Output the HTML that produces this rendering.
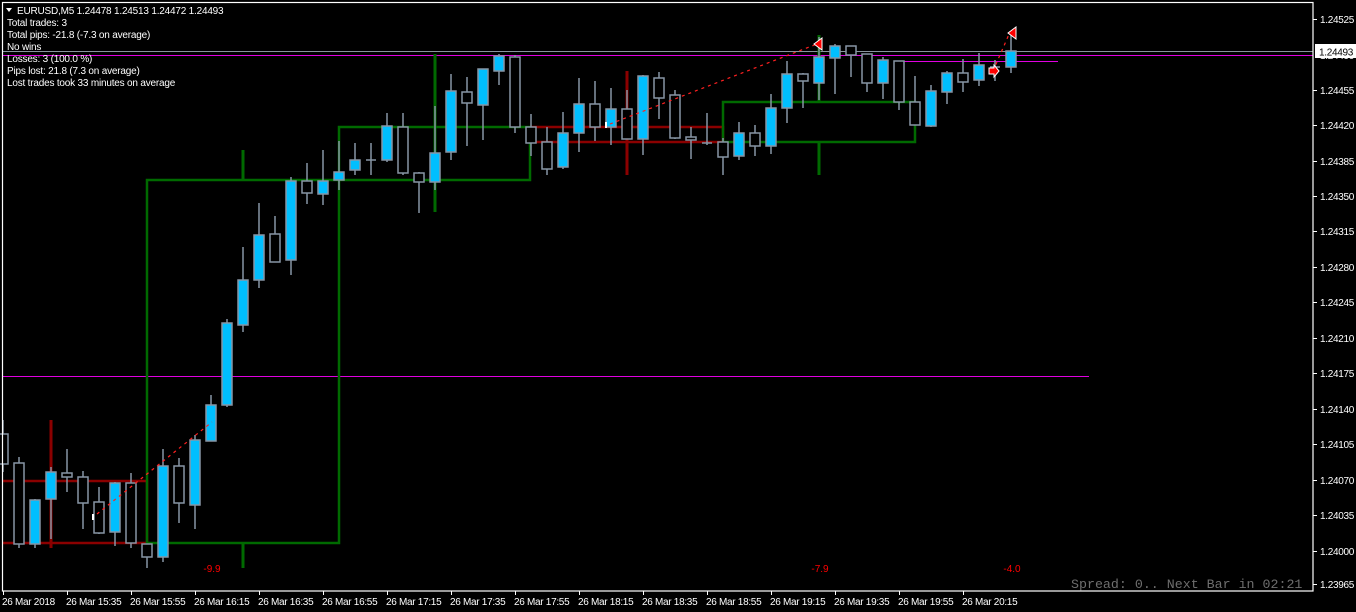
<!DOCTYPE html>
<html><head><meta charset="utf-8"><style>
html,body{margin:0;padding:0;background:#000;width:1356px;height:612px;overflow:hidden}
svg{display:block}
.b{fill:#00bfff;stroke:#8795a5;stroke-width:1.5}
.r{fill:#000;stroke:#8795a5;stroke-width:1.5}
.w{stroke:#8795a5;stroke-width:1.5}
text{font-family:"Liberation Sans",Tahoma,sans-serif}
</style></head><body>
<svg width="1356" height="612" viewBox="0 0 1356 612" xmlns="http://www.w3.org/2000/svg">
<rect width="1356" height="612" fill="#000"/>
<line x1="2" y1="51.5" x2="1313" y2="51.5" stroke="#8a94a0" stroke-width="1"/>
<line x1="2" y1="55.5" x2="1313" y2="55.5" stroke="#e000e0" stroke-width="1"/>
<line x1="900" y1="61.5" x2="1058" y2="61.5" stroke="#e000e0" stroke-width="1"/>
<line x1="2" y1="376.5" x2="1089" y2="376.5" stroke="#e000e0" stroke-width="1"/>
<g stroke="#8b0000" stroke-width="2.5" fill="none">
<polyline points="3,481 147,481 147,543 3,543"/>
<polyline points="530,127 723,127 723,142 530,142"/>
</g>
<line x1="51" y1="420" x2="51" y2="548" stroke="#8b0000" stroke-width="3"/>
<line x1="627" y1="71" x2="627" y2="175" stroke="#8b0000" stroke-width="3"/>
<g stroke="#006a00" stroke-width="2.5" fill="none">
<rect x="147" y="180" width="192" height="363"/>
<rect x="339" y="127" width="191" height="53"/>
<rect x="723" y="102" width="192" height="40"/>
</g>
<g stroke="#006a00" stroke-width="3">
<line x1="243" y1="150" x2="243" y2="181"/><line x1="243" y1="543" x2="243" y2="568"/>
<line x1="435" y1="54" x2="435" y2="212"/>
<line x1="819" y1="35" x2="819" y2="102"/><line x1="819" y1="142" x2="819" y2="175"/>
</g>
<g>
<line class="w" x1="3" y1="420" x2="3" y2="472"/><rect class="r" x="-2" y="434" width="10" height="30"/>
<line class="w" x1="19" y1="457" x2="19" y2="548"/><rect class="r" x="14" y="463" width="10" height="81"/>
<line class="w" x1="35" y1="499" x2="35" y2="548"/><rect class="b" x="30" y="500" width="10" height="44"/>
<line class="w" x1="51" y1="467" x2="51" y2="539"/><rect class="b" x="46" y="472" width="10" height="27"/>
<line class="w" x1="67" y1="449" x2="67" y2="492"/><rect class="r" x="62" y="473" width="10" height="4"/>
<line class="w" x1="83" y1="471" x2="83" y2="529"/><rect class="r" x="78" y="477" width="10" height="26"/>
<line class="w" x1="99" y1="487" x2="99" y2="534"/><rect class="r" x="94" y="502" width="10" height="31"/>
<line class="w" x1="115" y1="482" x2="115" y2="546"/><rect class="b" x="110" y="483" width="10" height="49"/>
<line class="w" x1="131" y1="473" x2="131" y2="548"/><rect class="r" x="126" y="483" width="10" height="60"/>
<line class="w" x1="147" y1="544" x2="147" y2="568"/><rect class="r" x="142" y="544" width="10" height="13"/>
<line class="w" x1="163" y1="449" x2="163" y2="562"/><rect class="b" x="158" y="466" width="10" height="91"/>
<line class="w" x1="179" y1="458" x2="179" y2="523"/><rect class="r" x="174" y="466" width="10" height="37"/>
<line class="w" x1="195" y1="435" x2="195" y2="529"/><rect class="b" x="190" y="440" width="10" height="65"/>
<line class="w" x1="211" y1="395" x2="211" y2="441"/><rect class="b" x="206" y="405" width="10" height="36"/>
<line class="w" x1="227" y1="319" x2="227" y2="407"/><rect class="b" x="222" y="323" width="10" height="82"/>
<line class="w" x1="243" y1="247" x2="243" y2="332"/><rect class="b" x="238" y="280" width="10" height="45"/>
<line class="w" x1="259" y1="203" x2="259" y2="288"/><rect class="b" x="254" y="235" width="10" height="45"/>
<line class="w" x1="275" y1="216" x2="275" y2="262"/><rect class="r" x="270" y="234" width="10" height="28"/>
<line class="w" x1="291" y1="177" x2="291" y2="275"/><rect class="b" x="286" y="181" width="10" height="79"/>
<line class="w" x1="307" y1="163" x2="307" y2="204"/><rect class="r" x="302" y="181" width="10" height="12"/>
<line class="w" x1="323" y1="150" x2="323" y2="205"/><rect class="b" x="318" y="181" width="10" height="13"/>
<line class="w" x1="339" y1="141" x2="339" y2="190"/><rect class="b" x="334" y="172" width="10" height="8"/>
<line class="w" x1="355" y1="143" x2="355" y2="175"/><rect class="b" x="350" y="160" width="10" height="10"/>
<line class="w" x1="371" y1="143" x2="371" y2="175"/><line class="w" x1="366" y1="160" x2="376" y2="160"/>
<line class="w" x1="387" y1="113" x2="387" y2="162"/><rect class="b" x="382" y="126" width="10" height="34"/>
<line class="w" x1="403" y1="113" x2="403" y2="175"/><rect class="r" x="398" y="127" width="10" height="46"/>
<line class="w" x1="419" y1="172" x2="419" y2="213"/><rect class="r" x="414" y="173" width="10" height="9"/>
<line class="w" x1="435" y1="106" x2="435" y2="190"/><rect class="b" x="430" y="153" width="10" height="29"/>
<line class="w" x1="451" y1="74" x2="451" y2="160"/><rect class="b" x="446" y="91" width="10" height="61"/>
<line class="w" x1="467" y1="77" x2="467" y2="146"/><rect class="r" x="462" y="92" width="10" height="11"/>
<line class="w" x1="483" y1="69" x2="483" y2="140"/><rect class="b" x="478" y="69" width="10" height="36"/>
<line class="w" x1="499" y1="54" x2="499" y2="85"/><rect class="b" x="494" y="56" width="10" height="15"/>
<line class="w" x1="515" y1="55" x2="515" y2="133"/><rect class="r" x="510" y="57" width="10" height="70"/>
<line class="w" x1="531" y1="114" x2="531" y2="156"/><rect class="r" x="526" y="127" width="10" height="16"/>
<line class="w" x1="547" y1="127" x2="547" y2="175"/><rect class="r" x="542" y="142" width="10" height="27"/>
<line class="w" x1="563" y1="112" x2="563" y2="169"/><rect class="b" x="558" y="133" width="10" height="34"/>
<line class="w" x1="579" y1="78" x2="579" y2="152"/><rect class="b" x="574" y="104" width="10" height="29"/>
<line class="w" x1="595" y1="81" x2="595" y2="141"/><rect class="r" x="590" y="104" width="10" height="23"/>
<line class="w" x1="611" y1="88" x2="611" y2="145"/><rect class="b" x="606" y="109" width="10" height="18"/>
<line class="w" x1="627" y1="90" x2="627" y2="139"/><rect class="r" x="622" y="109" width="10" height="30"/>
<line class="w" x1="643" y1="75" x2="643" y2="155"/><rect class="b" x="638" y="76" width="10" height="63"/>
<line class="w" x1="659" y1="72" x2="659" y2="119"/><rect class="r" x="654" y="78" width="10" height="20"/>
<line class="w" x1="675" y1="90" x2="675" y2="139"/><rect class="r" x="670" y="95" width="10" height="43"/>
<line class="w" x1="691" y1="127" x2="691" y2="159"/><rect class="r" x="686" y="137" width="10" height="3"/>
<line class="w" x1="707" y1="113" x2="707" y2="145"/><line class="w" x1="702" y1="143" x2="712" y2="143"/>
<line class="w" x1="723" y1="138" x2="723" y2="175"/><rect class="r" x="718" y="142" width="10" height="15"/>
<line class="w" x1="739" y1="122" x2="739" y2="160"/><rect class="b" x="734" y="133" width="10" height="23"/>
<line class="w" x1="755" y1="125" x2="755" y2="156"/><rect class="r" x="750" y="133" width="10" height="13"/>
<line class="w" x1="771" y1="94" x2="771" y2="154"/><rect class="b" x="766" y="108" width="10" height="38"/>
<line class="w" x1="787" y1="61" x2="787" y2="123"/><rect class="b" x="782" y="74" width="10" height="34"/>
<line class="w" x1="803" y1="73" x2="803" y2="108"/><rect class="r" x="798" y="74" width="10" height="7"/>
<line class="w" x1="819" y1="37" x2="819" y2="100"/><rect class="b" x="814" y="57" width="10" height="26"/>
<line class="w" x1="835" y1="44" x2="835" y2="94"/><rect class="b" x="830" y="46" width="10" height="12"/>
<line class="w" x1="851" y1="46" x2="851" y2="77"/><rect class="r" x="846" y="46" width="10" height="9"/>
<line class="w" x1="867" y1="54" x2="867" y2="92"/><rect class="r" x="862" y="54" width="10" height="29"/>
<line class="w" x1="883" y1="57" x2="883" y2="99"/><rect class="b" x="878" y="60" width="10" height="23"/>
<line class="w" x1="899" y1="61" x2="899" y2="110"/><rect class="r" x="894" y="61" width="10" height="41"/>
<line class="w" x1="915" y1="76" x2="915" y2="125"/><rect class="r" x="910" y="102" width="10" height="23"/>
<line class="w" x1="931" y1="85" x2="931" y2="127"/><rect class="b" x="926" y="91" width="10" height="35"/>
<line class="w" x1="947" y1="71" x2="947" y2="104"/><rect class="b" x="942" y="73" width="10" height="19"/>
<line class="w" x1="963" y1="59" x2="963" y2="92"/><rect class="r" x="958" y="73" width="10" height="9"/>
<line class="w" x1="979" y1="53" x2="979" y2="86"/><rect class="b" x="974" y="65" width="10" height="15"/>
<line class="w" x1="995" y1="60" x2="995" y2="81"/><line class="w" x1="990" y1="67" x2="1000" y2="67"/>
<line class="w" x1="1011" y1="33" x2="1011" y2="73"/><rect class="b" x="1006" y="51" width="10" height="16"/>
</g>
<g stroke="#ff2020" stroke-width="1.2" stroke-dasharray="3,4" fill="none">
<line x1="97" y1="514" x2="212" y2="422"/>
<line x1="610" y1="124" x2="817" y2="44"/>
<line x1="993" y1="71" x2="1010" y2="32"/>
</g>
<rect x="92" y="514" width="2" height="6" fill="#fff"/>
<rect x="605" y="122" width="2" height="6" fill="#fff"/>
<polygon points="814,44 822,38 822,50" fill="#ff0000" stroke="#fff" stroke-width="1"/>
<polygon points="1008,33 1016,27 1016,39" fill="#ff0000" stroke="#fff" stroke-width="1"/>
<polygon points="989,68 994,68 994,65 999,71 994,77 994,74 989,74" fill="#ff0000" stroke="#fff" stroke-width="1"/>
<g fill="#ff0000" font-size="10" text-anchor="middle">
<text x="212" y="572">-9.9</text><text x="820" y="572">-7.9</text><text x="1012" y="572">-4.0</text>
</g>
<rect x="2.5" y="2.5" width="1310.5" height="588.5" fill="none" stroke="#fff" stroke-width="1.2"/>
<g fill="#fff" font-size="10" letter-spacing="-0.3">
<g stroke="#fff" stroke-width="1">
<line x1="1313" y1="19.5" x2="1317" y2="19.5"/><line x1="1313" y1="90.5" x2="1317" y2="90.5"/>
<line x1="1313" y1="125.5" x2="1317" y2="125.5"/><line x1="1313" y1="161.5" x2="1317" y2="161.5"/>
<line x1="1313" y1="196.5" x2="1317" y2="196.5"/><line x1="1313" y1="231.5" x2="1317" y2="231.5"/>
<line x1="1313" y1="267.5" x2="1317" y2="267.5"/><line x1="1313" y1="302.5" x2="1317" y2="302.5"/>
<line x1="1313" y1="338.5" x2="1317" y2="338.5"/><line x1="1313" y1="373.5" x2="1317" y2="373.5"/>
<line x1="1313" y1="409.5" x2="1317" y2="409.5"/><line x1="1313" y1="444.5" x2="1317" y2="444.5"/>
<line x1="1313" y1="480.5" x2="1317" y2="480.5"/><line x1="1313" y1="515.5" x2="1317" y2="515.5"/>
<line x1="1313" y1="551.5" x2="1317" y2="551.5"/><line x1="1313" y1="584.5" x2="1317" y2="584.5"/>
</g>
<text x="1320" y="23">1.24525</text>
<text x="1320" y="59">1.24490</text>
<text x="1320" y="94">1.24455</text>
<text x="1320" y="129">1.24420</text>
<text x="1320" y="165">1.24385</text>
<text x="1320" y="200">1.24350</text>
<text x="1320" y="235">1.24315</text>
<text x="1320" y="271">1.24280</text>
<text x="1320" y="306">1.24245</text>
<text x="1320" y="342">1.24210</text>
<text x="1320" y="377">1.24175</text>
<text x="1320" y="413">1.24140</text>
<text x="1320" y="448">1.24105</text>
<text x="1320" y="484">1.24070</text>
<text x="1320" y="519">1.24035</text>
<text x="1320" y="555">1.24000</text>
<text x="1320" y="588">1.23965</text>
<rect x="1315" y="44" width="41" height="14" fill="#fff"/>
<text x="1319" y="55.5" fill="#000">1.24493</text>
</g>
<g stroke="#fff" stroke-width="1">
<line x1="3.5" y1="591" x2="3.5" y2="595"/><line x1="67.5" y1="591" x2="67.5" y2="595"/><line x1="131.5" y1="591" x2="131.5" y2="595"/><line x1="195.5" y1="591" x2="195.5" y2="595"/><line x1="259.5" y1="591" x2="259.5" y2="595"/><line x1="323.5" y1="591" x2="323.5" y2="595"/><line x1="387.5" y1="591" x2="387.5" y2="595"/><line x1="451.5" y1="591" x2="451.5" y2="595"/><line x1="515.5" y1="591" x2="515.5" y2="595"/><line x1="579.5" y1="591" x2="579.5" y2="595"/><line x1="643.5" y1="591" x2="643.5" y2="595"/><line x1="707.5" y1="591" x2="707.5" y2="595"/><line x1="771.5" y1="591" x2="771.5" y2="595"/><line x1="835.5" y1="591" x2="835.5" y2="595"/><line x1="899.5" y1="591" x2="899.5" y2="595"/><line x1="963.5" y1="591" x2="963.5" y2="595"/>
</g>
<g fill="#fff" font-size="10" letter-spacing="-0.3">
<text x="2" y="605">26 Mar 2018</text>
<text x="66" y="605">26 Mar 15:35</text>
<text x="130" y="605">26 Mar 15:55</text>
<text x="194" y="605">26 Mar 16:15</text>
<text x="258" y="605">26 Mar 16:35</text>
<text x="322" y="605">26 Mar 16:55</text>
<text x="386" y="605">26 Mar 17:15</text>
<text x="450" y="605">26 Mar 17:35</text>
<text x="514" y="605">26 Mar 17:55</text>
<text x="578" y="605">26 Mar 18:15</text>
<text x="642" y="605">26 Mar 18:35</text>
<text x="706" y="605">26 Mar 18:55</text>
<text x="770" y="605">26 Mar 19:15</text>
<text x="834" y="605">26 Mar 19:35</text>
<text x="898" y="605">26 Mar 19:55</text>
<text x="962" y="605">26 Mar 20:15</text>
</g>
<text x="1071" y="588" fill="#6e6e6e" font-size="13.3" style="font-family:'Liberation Mono',monospace">Spread: 0.. Next Bar in 02:21</text>
<polygon points="6,8 12,8 9,12" fill="#fff"/>
<g fill="#fff" font-size="10" letter-spacing="-0.2">
<text x="17" y="14">EURUSD,M5  1.24478 1.24513 1.24472 1.24493</text>
<text x="7" y="26">Total trades: 3</text>
<text x="7" y="38">Total pips: -21.8 (-7.3 on average)</text>
<text x="7" y="50">No wins</text>
<text x="7" y="62">Losses: 3 (100.0 %)</text>
<text x="7" y="74">Pips lost: 21.8 (7.3 on average)</text>
<text x="7" y="86">Lost trades took 33 minutes on average</text>
</g>
</svg>
</body></html>
